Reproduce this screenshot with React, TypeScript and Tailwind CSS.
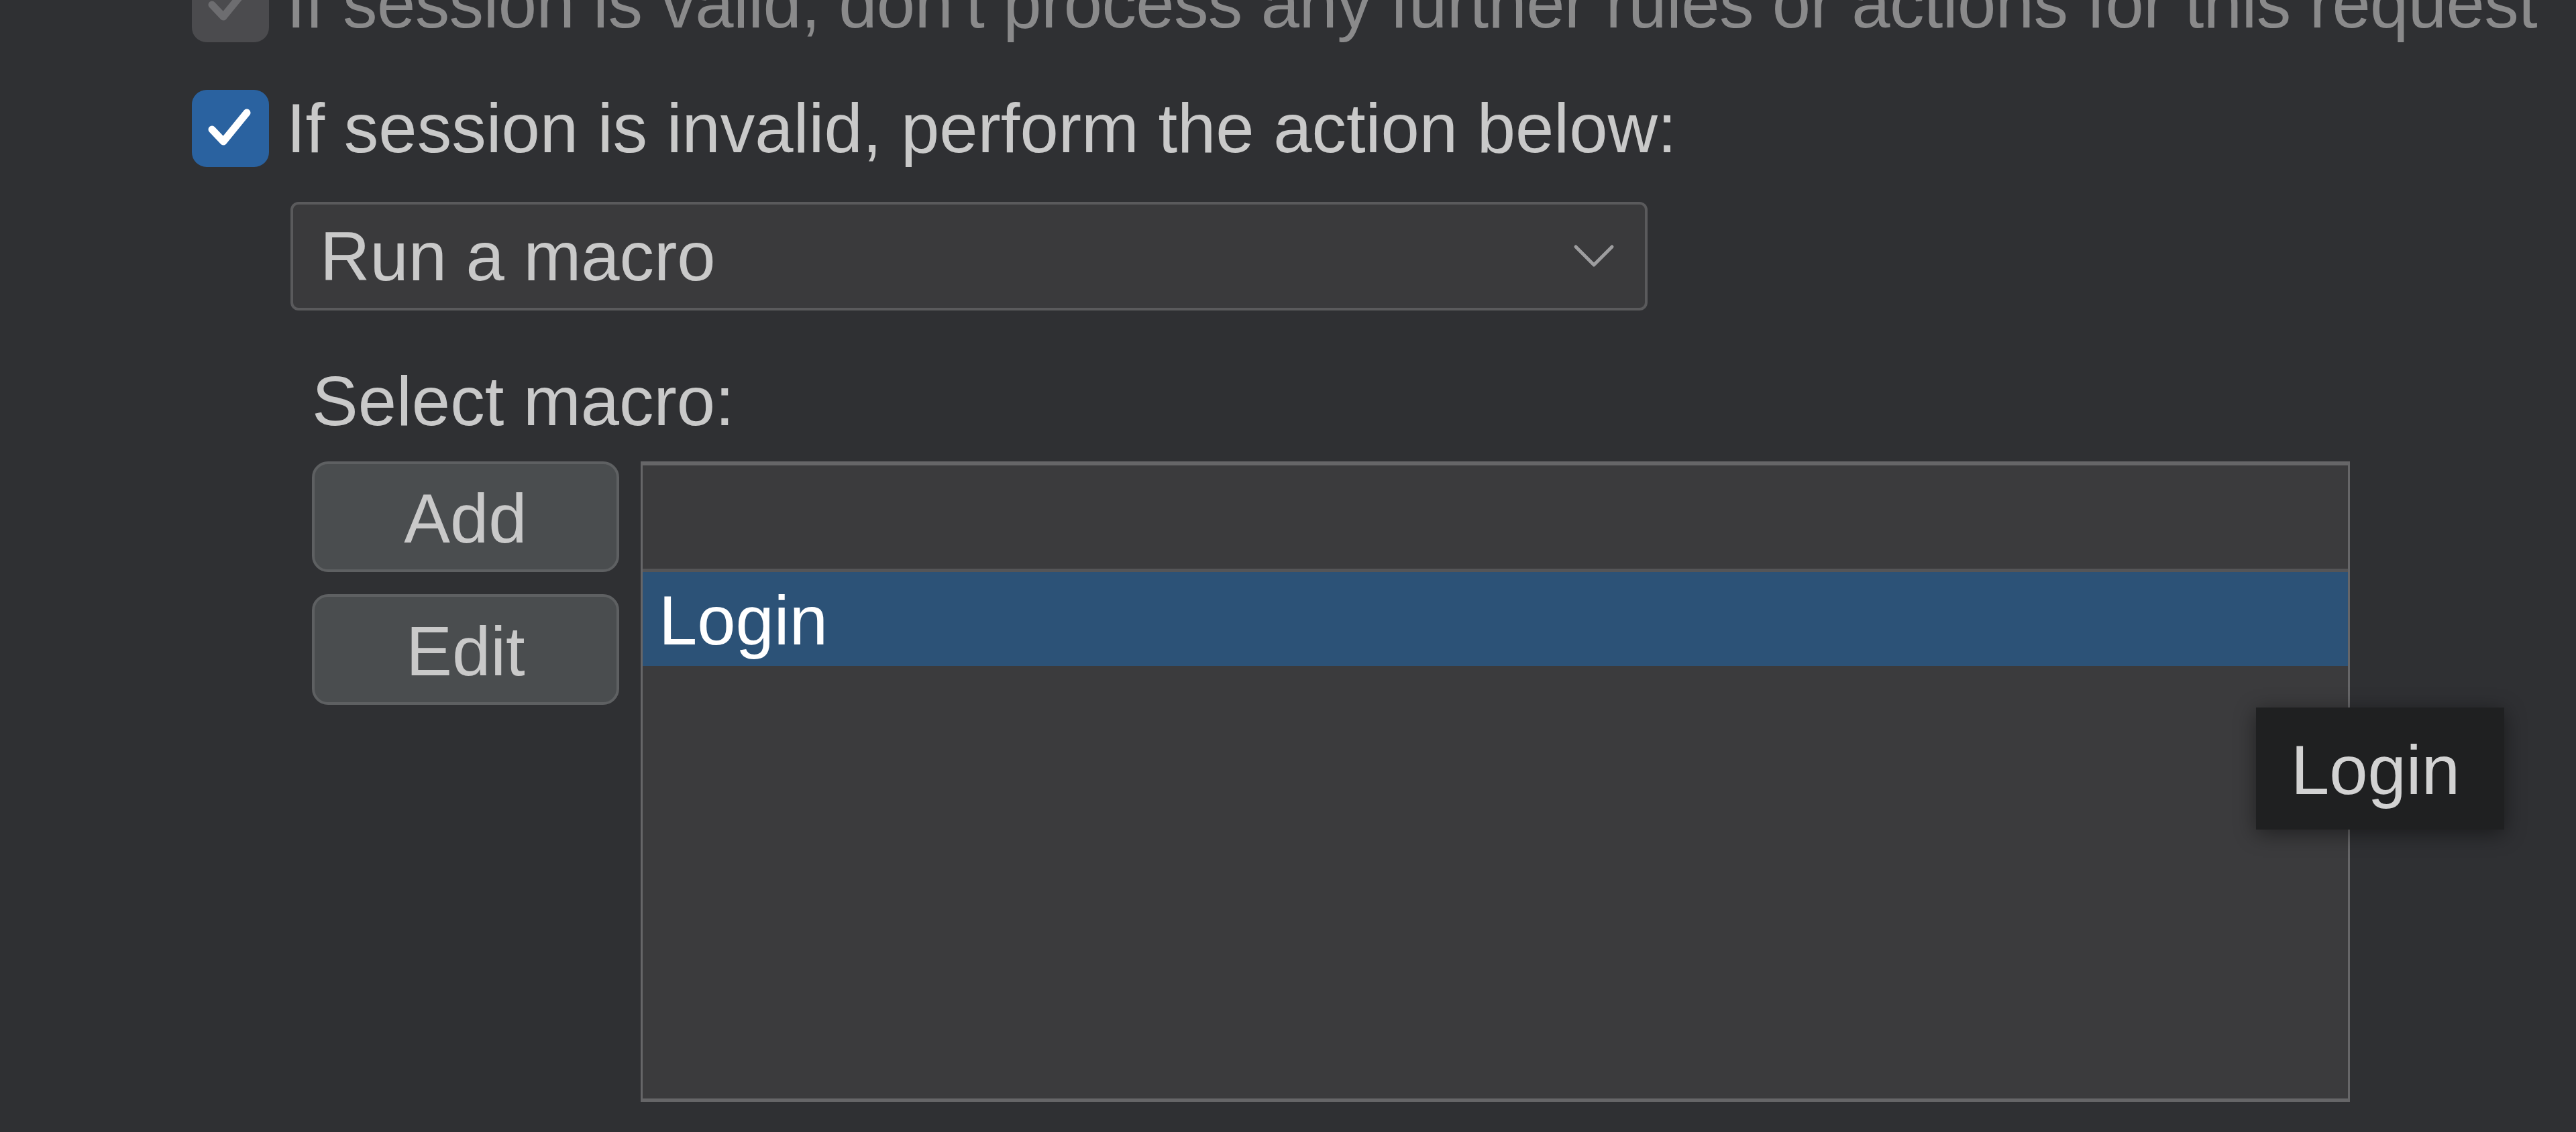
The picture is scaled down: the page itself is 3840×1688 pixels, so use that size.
import React from "react";

function Check({ color }: { color: string }) {
  return (
    <svg width="115" height="115" viewBox="0 0 115 115" className="absolute inset-0">
      <path d="M30 59 L47 77 L82 34" fill="none" stroke={color} strokeWidth="11" strokeLinecap="round" strokeLinejoin="round" />
    </svg>
  );
}

export default function App() {
  return (
    <div
      className="relative w-[3840px] h-[1688px] overflow-hidden bg-[#2f3033] text-[103px] leading-none"
      style={{ fontFamily: '"Liberation Sans", Arial, sans-serif' }}
    >
      <div className="flex flex-col pl-[286px]">
        {/* Row 1 (disabled) */}
        <div className="mt-[-52px] flex h-[115px] items-center gap-[26px] whitespace-nowrap">
          <div className="relative h-[115px] w-[115px] shrink-0 rounded-[22px] bg-[#4b4b4e]">
            <Check color="#6d6d70" />
          </div>
          <span className="tracking-[-0.6px] text-[#8a8a8b]">If session is valid, don't process any further rules or actions for this request</span>
        </div>

        {/* Row 2 */}
        <div className="mt-[71px] flex h-[115px] items-center gap-[26px] whitespace-nowrap">
          <div className="relative h-[115px] w-[115px] shrink-0 rounded-[22px] bg-[#2a62a0]">
            <Check color="#ffffff" />
          </div>
          <span className="text-[#c9c9c9]">If session is invalid, perform the action below:</span>
        </div>

        {/* Dropdown */}
        <div className="ml-[147px] mt-[52px] flex h-[162px] w-[2023px] items-center justify-between rounded-[12px] border-[4px] border-[#5a5a5c] bg-[#3a3a3c] pl-[40px] pr-[45px]">
          <span className="text-[#c9c9c9]">Run a macro</span>
          <svg width="62" height="38" viewBox="0 0 62 38">
            <path d="M4 5 L31 32 L58 5" fill="none" stroke="#9d9d9f" strokeWidth="5" strokeLinecap="round" strokeLinejoin="round" />
          </svg>
        </div>

        {/* Select macro label */}
        <div className="ml-[179px] mt-[84px] text-[#c9c9c9]">Select macro:</div>

        {/* Buttons + list */}
        <div className="ml-[179px] mt-[38px] flex gap-[32px]">
          <div className="flex w-[458px] flex-col gap-[33px]">
            <div className="flex h-[165px] items-center justify-center rounded-[24px] border-[4px] border-[#5e6062] bg-[#4a4d4f] pt-[6px] text-[#c9c9c9]">
              Add
            </div>
            <div className="flex h-[165px] items-center justify-center rounded-[24px] border-[4px] border-[#5e6062] bg-[#4a4d4f] pt-[6px] text-[#c9c9c9]">
              Edit
            </div>
          </div>

          <div className="flex h-[955px] w-[2548px] flex-col border-x-[3px] border-b-[5px] border-t-[6px] border-[#666668] bg-[#3b3b3d]">
            <div className="h-[159px] shrink-0 border-b-[5px] border-[#555557]" />
            <div className="flex h-[140px] shrink-0 items-center bg-[#2c5277] pl-[24px] pt-[4px] text-white">Login</div>
          </div>
        </div>
      </div>

      {/* Tooltip */}
      <div className="absolute left-[3363px] top-[1055px] flex h-[182px] w-[370px] items-center bg-[#1f2021] pl-[52px] pt-[4px] text-[#d2d2d2] shadow-[0_6px_30px_rgba(0,0,0,0.45)]">
        Login
      </div>
    </div>
  );
}
